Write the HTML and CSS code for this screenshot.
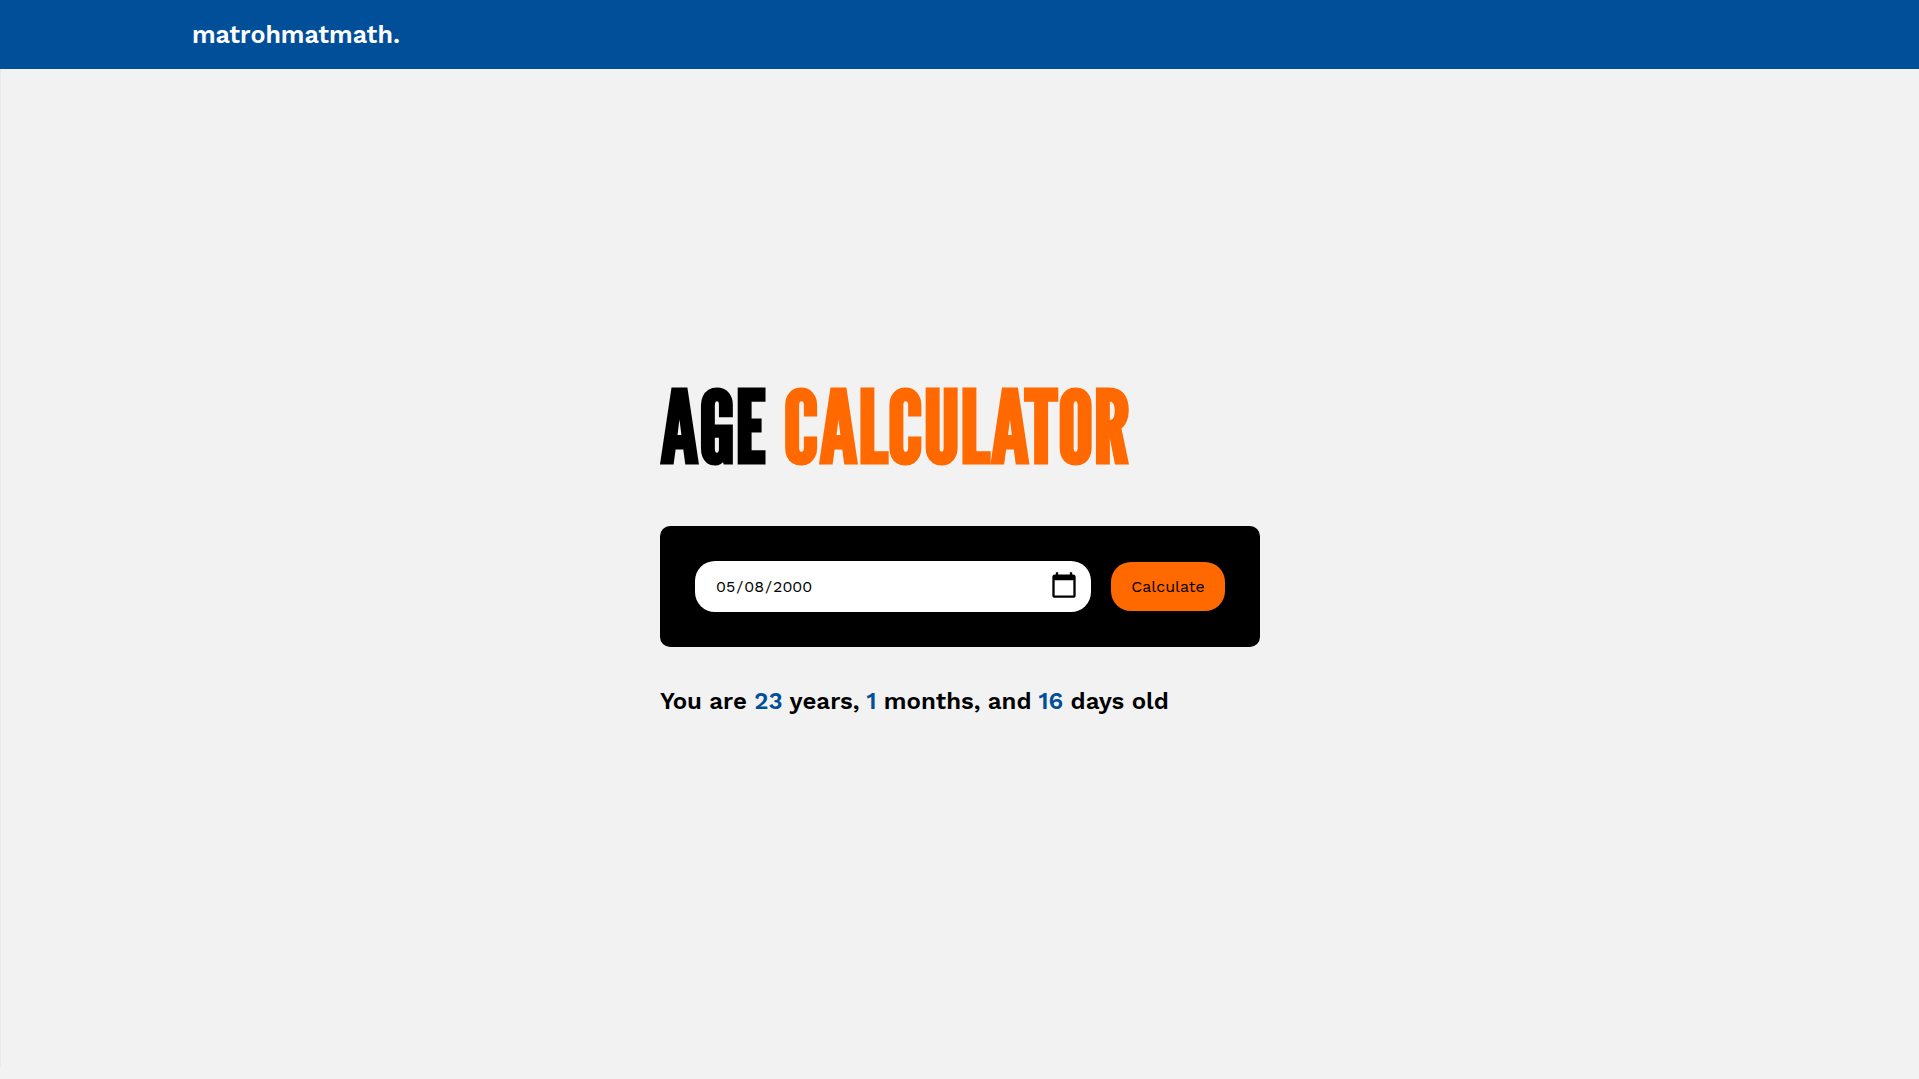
FILE: index.html
```html
<!DOCTYPE html>
<html lang="en-US">
<head>
  <meta charset="utf-8">
  <meta name="viewport" content="width=device-width, initial-scale=1">
  <title>Age Calculator</title>
  <link rel="stylesheet" href="styles.css">
</head>
<body>
  <header class="site-header">
    <a class="brand" href="#">matrohmatmath.</a>
  </header>
  <main class="page">
    <div class="calculator">
      <h1 class="title">AGE <span class="title-accent">CALCULATOR</span></h1>
      <form class="panel">
        <input class="date-input" type="date" value="2000-05-08" aria-label="Date of birth">
        <button class="calculate" type="button">Calculate</button>
      </form>
      <p class="result">You are <span class="value">23</span> years, <span class="value">1</span> months, and <span class="value">16</span> days old</p>
    </div>
  </main>
</body>
</html>
```

FILE: styles.css
```css
* {
  box-sizing: border-box;
}

body {
  margin: 0;
  background: #f2f2f2;
  color: #000;
  font-family: "Work Sans", Inter, sans-serif;
}

.site-header {
  padding: 18px 10%;
  background: #004f98;
}

.brand {
  display: block;
  color: #fff;
  font-size: 25px;
  font-weight: 600;
  line-height: 33px;
  text-decoration: none;
}

.page {
  display: flex;
  align-items: center;
  justify-content: center;
  min-height: calc(100vh - 81px);
  padding: 24px;
  border-left: 1px solid #e8e8e8;
}

.calculator {
  width: 100%;
  max-width: 600px;
  padding-bottom: 52px;
}

.title {
  margin: 0 0 40px;
  font-family: "League Gothic", "Bebas Neue", "Liberation Sans Narrow", "Liberation Sans", sans-serif;
  font-size: 100px;
  font-weight: 700;
  line-height: 120px;
  white-space: nowrap;
}

.title-accent {
  color: #ff6900;
}

.panel {
  display: flex;
  align-items: center;
  gap: 20px;
  padding: 35px;
  border-radius: 10px;
  background: #000;
}

.date-input {
  flex: 1;
  min-width: 0;
  height: 51px;
  padding: 0 12px 0 20px;
  border: 0;
  border-radius: 20px;
  background: #fff;
  color: #000;
  font: 400 16px "Work Sans", Inter, sans-serif;
}

.date-input::-webkit-calendar-picker-indicator {
  width: 30px;
  height: 30px;
  padding: 0;
}

.calculate {
  min-width: 114px;
  height: 49px;
  padding: 0 16px;
  border: 0;
  border-radius: 20px;
  background: #ff6900;
  color: #000;
  font: 400 16px "Work Sans", Inter, sans-serif;
}

.result {
  margin: 36px 0 0;
  font-size: 24px;
  font-weight: 600;
  line-height: 36px;
}

.value {
  color: #004f98;
}
```
